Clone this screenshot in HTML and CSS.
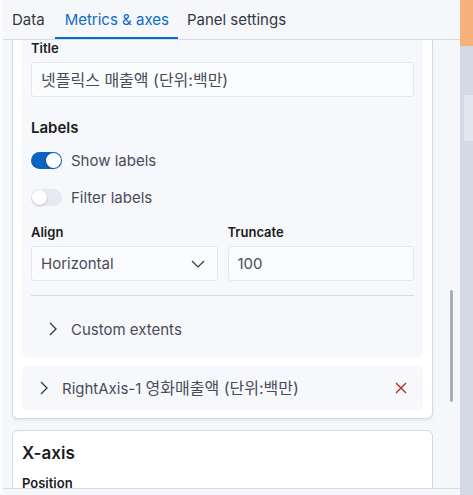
FILE: index.html
```html
<!DOCTYPE html>
<html lang="ko">
<head>
<meta charset="utf-8">
<link rel="stylesheet" href="styles.css">
</head>
<body>
<div class="frame">
  <div class="main">
    <div class="tabs">
      <div class="tab">Data</div>
      <div class="tab active">Metrics &amp; axes</div>
      <div class="tab">Panel settings</div>
    </div>
    <div class="content">
      <div class="card card-top">
        <div class="inner">
          <div class="label">Title</div>
          <div class="field"><span class="ko">넷플릭스 매출액 (단위:백만)</span></div>
          <div class="section-title">Labels</div>
          <div class="switch-row">
            <span class="switch on"><span class="knob"></span></span>
            <span class="switch-text">Show labels</span>
          </div>
          <div class="switch-row">
            <span class="switch off"><span class="knob"></span></span>
            <span class="switch-text">Filter labels</span>
          </div>
          <div class="cols">
            <div class="col">
              <div class="label">Align</div>
              <div class="field select">
                <span>Horizontal</span>
                <svg width="14" height="8" viewBox="0 0 14 8"><path d="M1 1 L7 7 L13 1" fill="none" stroke="#343741" stroke-width="1.2"/></svg>
              </div>
            </div>
            <div class="col">
              <div class="label">Truncate</div>
              <div class="field">100</div>
            </div>
          </div>
          <div class="hr"></div>
          <div class="acc">
            <svg class="chev" width="8" height="14" viewBox="0 0 8 14"><path d="M1 1 L7 7 L1 13" fill="none" stroke="#343741" stroke-width="1.3"/></svg>
            <span>Custom extents</span>
          </div>
        </div>
        <div class="axis-row">
          <svg class="chev" width="8" height="14" viewBox="0 0 8 14"><path d="M1 1 L7 7 L1 13" fill="none" stroke="#343741" stroke-width="1.3"/></svg>
          <span class="axis-name">RightAxis-1 <span class="ko">영화매출액 (단위:백만)</span></span>
          <svg class="del" width="12" height="12" viewBox="0 0 12 12"><path d="M1 1 L11 11 M11 1 L1 11" fill="none" stroke="#bd271e" stroke-width="1.4"/></svg>
        </div>
      </div>
      <div class="card card-x">
        <div class="card-title">X-axis</div>
        <div class="label">Position</div>
      </div>
      <div class="thumb"></div>
    </div>
    <div class="footer"></div>
  </div>
  <div class="side">
    <div class="side-top"></div>
    <div class="side-block"></div>
  </div>
</div>
</body>
</html>
```

FILE: styles.css
```css
* { box-sizing: border-box; }
html, body { margin: 0; padding: 0; }
body {
  width: 473px;
  height: 495px;
  overflow: hidden;
  font-family: Inter, "Noto Sans CJK KR", sans-serif;
  color: #474c58;
  background: #f5f7fa;
}
.ko {
  font-size: 16px;
  line-height: 20px;
}
.frame {
  display: flex;
  width: 473px;
  height: 495px;
}
.main {
  width: 460px;
  display: flex;
  flex-direction: column;
  border-left: 3px solid #fafbfd;
  background: #f5f7fa;
}
.tabs {
  height: 40px;
  display: flex;
  border-bottom: 1px solid #d3dae6;
}
.tab {
  font-size: 15px;
  padding: 0 9px;
  line-height: 39px;
  color: #343741;
  height: 39px;
}
.tab:first-child { padding-left: 9px; margin-right: 1px; }
.tab.active {
  color: #0b6bc9;
  border-bottom: 2px solid #0b6bc9;
  padding-left: 10px;
  padding-right: 9px;
}
.content {
  flex: 1;
  position: relative;
  overflow: hidden;
  padding: 0 27px 0 9px;
}
.card {
  background: #fff;
  border: 1px solid #d3dae6;
  border-radius: 6px;
  width: 421px;
}
.card-top {
  border-top: none;
  border-radius: 0 0 6px 6px;
  padding: 0 9px 8px 9px;
  box-shadow: 0 2px 3px rgba(0,0,0,0.06);
}
.inner {
  background: #f7f8fc;
  border-radius: 0 0 6px 6px;
  padding: 0 9px 18px 9px;
}
.label {
  font-size: 13px;
  font-weight: 600;
  color: #1a1c21;
  line-height: 17px;
}
.field {
  height: 35px;
  margin-top: 5px;
  background: #fbfcfd;
  border: 1px solid #e3e7ef;
  border-radius: 3px;
  padding: 0 9px;
  display: flex;
  align-items: center;
  font-size: 15px;
  color: #474c58;
}
.select { justify-content: space-between; padding-right: 12px; }
.section-title {
  margin-top: 21px;
  font-size: 15px;
  font-weight: 600;
  color: #1a1c21;
  line-height: 20px;
}
.switch-row {
  display: flex;
  align-items: center;
  height: 20px;
  margin-top: 12px;
}
.switch-row + .switch-row { margin-top: 17px; }
.switch {
  width: 31px;
  height: 17px;
  border-radius: 9px;
  position: relative;
  flex: none;
}
.switch.on { background: #0b64c2; }
.switch.off { background: #e6e9f0; }
.knob {
  position: absolute;
  top: 1px;
  width: 15px;
  height: 15px;
  border-radius: 50%;
  background: #fff;
  box-shadow: 0 1px 2px rgba(0,0,0,0.2);
}
.switch.on .knob { right: 1px; }
.switch.off .knob { left: 1px; }
.switch-text {
  margin-left: 9px;
  font-size: 15px;
  color: #474c58;
}
.cols {
  display: flex;
  gap: 10px;
  margin-top: 17px;
}
.col { flex: 1; }
.hr {
  height: 1px;
  background: #d3dae6;
  margin-top: 14px;
}
.acc {
  display: flex;
  align-items: center;
  height: 20px;
  margin-top: 23px;
  padding-left: 18px;
  font-size: 15px;
}
.chev { margin-right: 14px; }
.axis-row {
  margin-top: 9px;
  height: 44px;
  background: #f7f8fc;
  border-radius: 6px;
  display: flex;
  align-items: center;
  padding: 0 16px 0 18px;
  font-size: 15px;
}
.axis-name { flex: 1; }
.card-x {
  margin-top: 11px;
  padding: 10px 9px;
  height: 80px;
}
.card-title {
  font-size: 17px;
  font-weight: 600;
  color: #1a1c21;
  line-height: 24px;
  margin-bottom: 10px;
}
.thumb {
  position: absolute;
  left: 447px;
  top: 250px;
  width: 3px;
  height: 112px;
  background: #a9afba;
  border-radius: 2px;
}
.footer {
  height: 7px;
  border-top: 1px solid #d3dae6;
  background: #f5f7fa;
}
.side {
  width: 13px;
  background: #d3dae6;
  display: flex;
  flex-direction: column;
}
.side-top {
  height: 46px;
  background: #f7b27c;
}
.side-block {
  margin-top: 49px;
  margin-left: 4px;
  height: 46px;
  background: #e1e6ef;
}
```
